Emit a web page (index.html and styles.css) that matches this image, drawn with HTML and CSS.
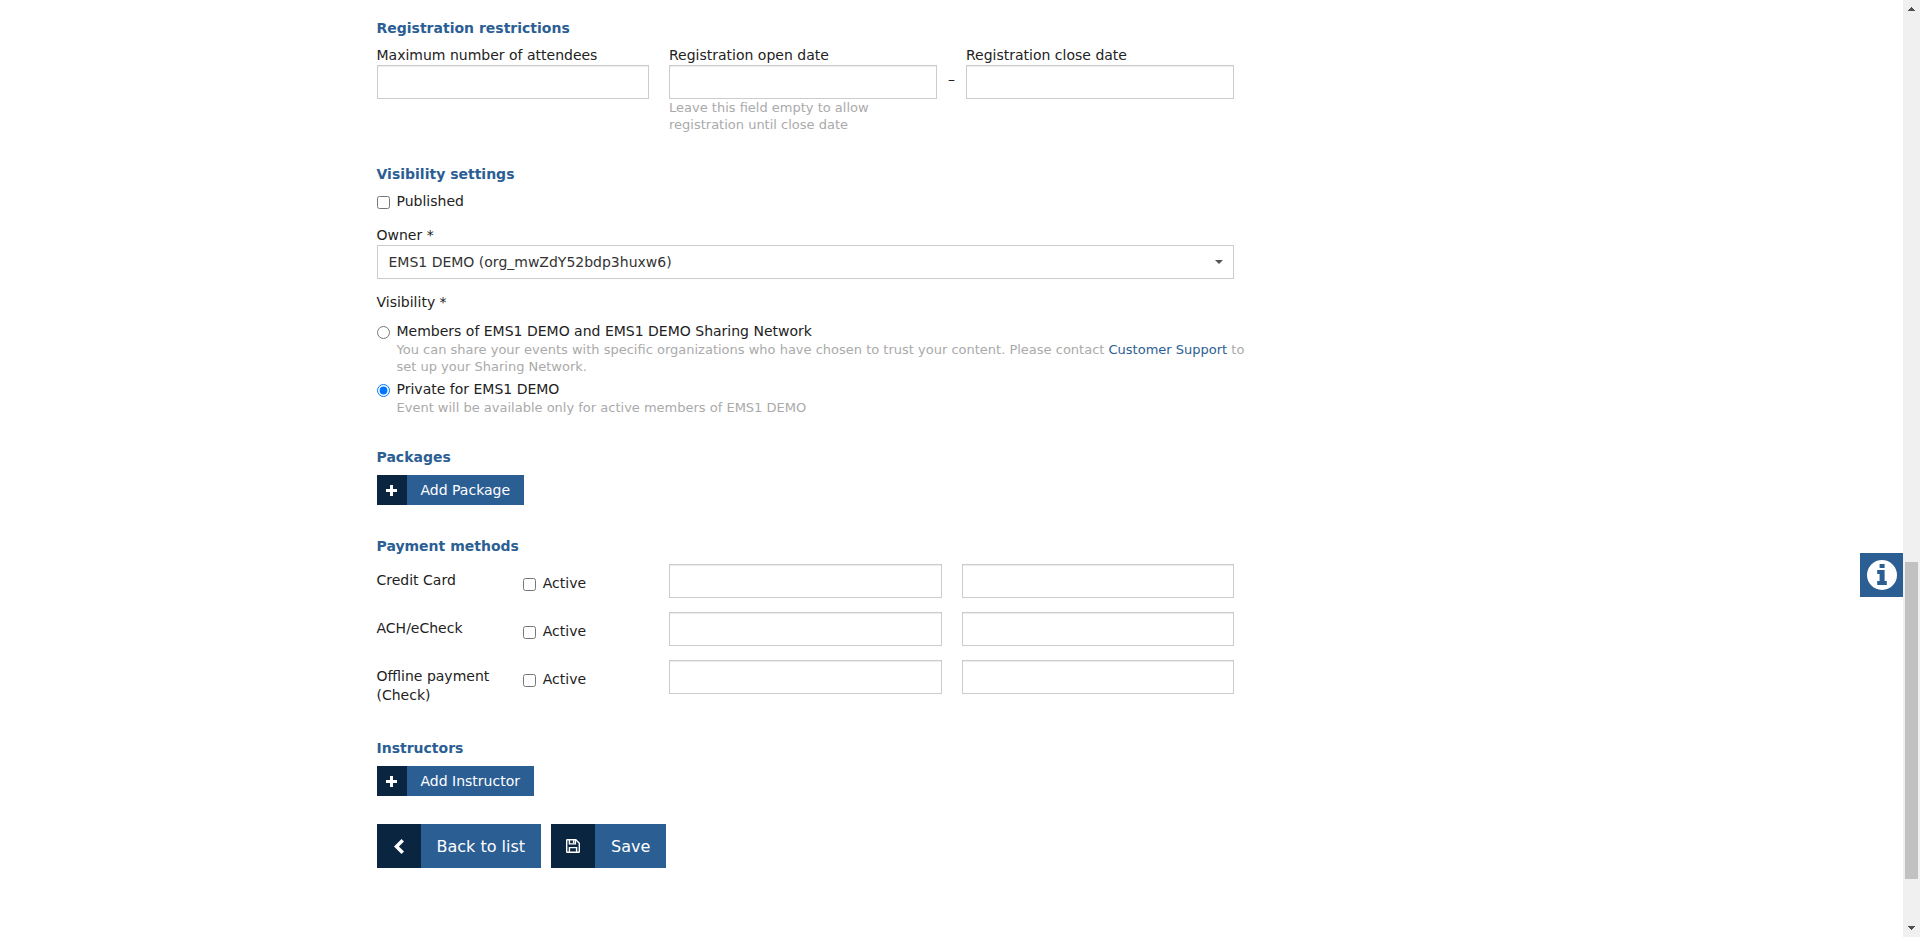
FILE: index.html
```html
<!DOCTYPE html>
<html lang="en">

<head>
  <meta charset="UTF-8" />
  <meta name="viewport" content="width=device-width, initial-scale=1.0" />
  <title>Edit event</title>
  <link rel="stylesheet" href="styles.css">
</head>

<body>
  <main class="container">
    <form class="event-form">

      <section class="form-section">
        <h2>Registration restrictions</h2>
        <div class="row restrictions">
          <div class="field">
            <label for="maxAttendees">Maximum number of attendees</label>
            <input type="text" id="maxAttendees" class="form-control">
          </div>
          <div class="date-range">
            <div class="field">
              <label for="openDate">Registration open date</label>
              <input type="text" id="openDate" class="form-control">
              <p class="hint hint-narrow">Leave this field empty to allow registration until close date</p>
            </div>
            <span class="dash">–</span>
            <div class="field">
              <label for="closeDate">Registration close date</label>
              <input type="text" id="closeDate" class="form-control">
            </div>
          </div>
        </div>
      </section>

      <section class="form-section">
        <h2>Visibility settings</h2>
        <div class="check">
          <input type="checkbox" id="published">
          <label for="published">Published</label>
        </div>
        <div class="field owner">
          <label for="owner">Owner *</label>
          <div class="select-wrap">
            <select id="owner" class="form-control">
              <option>EMS1 DEMO (org_mwZdY52bdp3huxw6)</option>
            </select>
          </div>
        </div>
        <p class="group-label">Visibility *</p>
        <div class="check">
          <input type="radio" name="visibility" id="visMembers">
          <div>
            <label for="visMembers">Members of EMS1 DEMO and EMS1 DEMO Sharing Network</label>
            <p class="hint hint-wide">You can share your events with specific organizations who have chosen to trust your content. Please contact <a href="#">Customer Support</a> to set up your Sharing Network.</p>
          </div>
        </div>
        <div class="check">
          <input type="radio" name="visibility" id="visPrivate" checked>
          <div>
            <label for="visPrivate">Private for EMS1 DEMO</label>
            <p class="hint">Event will be available only for active members of EMS1 DEMO</p>
          </div>
        </div>
      </section>

      <section class="form-section">
        <h2>Packages</h2>
        <button type="button" class="btn">
          <span class="btn-icon">
            <svg width="11" height="11" viewBox="0 0 11 11"><path d="M4 0h3v4h4v3H7v4H4V7H0V4h4z" fill="#fff" /></svg>
          </span>
          <span class="btn-text">Add Package</span>
        </button>
      </section>

      <section class="form-section">
        <h2>Payment methods</h2>
        <div class="row payment">
          <span class="method">Credit Card</span>
          <div class="check">
            <input type="checkbox" id="cardActive">
            <label for="cardActive">Active</label>
          </div>
          <input type="text" class="form-control" aria-label="Credit card first value">
          <input type="text" class="form-control" aria-label="Credit card second value">
        </div>
        <div class="row payment">
          <span class="method">ACH/eCheck</span>
          <div class="check">
            <input type="checkbox" id="achActive">
            <label for="achActive">Active</label>
          </div>
          <input type="text" class="form-control" aria-label="ACH first value">
          <input type="text" class="form-control" aria-label="ACH second value">
        </div>
        <div class="row payment">
          <span class="method">Offline payment (Check)</span>
          <div class="check">
            <input type="checkbox" id="offlineActive">
            <label for="offlineActive">Active</label>
          </div>
          <input type="text" class="form-control" aria-label="Offline first value">
          <input type="text" class="form-control" aria-label="Offline second value">
        </div>
      </section>

      <section class="form-section">
        <h2>Instructors</h2>
        <button type="button" class="btn">
          <span class="btn-icon">
            <svg width="11" height="11" viewBox="0 0 11 11"><path d="M4 0h3v4h4v3H7v4H4V7H0V4h4z" fill="#fff" /></svg>
          </span>
          <span class="btn-text">Add Instructor</span>
        </button>
      </section>

      <div class="actions">
        <button type="button" class="btn btn-lg">
          <span class="btn-icon">
            <svg width="10" height="15" viewBox="0 0 10 15"><path d="M7.5 0L10 2.4 4.9 7.5l5.1 5.1L7.5 15 0 7.5z" fill="#fff" /></svg>
          </span>
          <span class="btn-text">Back to list</span>
        </button>
        <button type="submit" class="btn btn-lg">
          <span class="btn-icon">
            <svg width="14" height="14" viewBox="0 0 14 14" fill="none" stroke="#fff" stroke-width="1.4">
              <path d="M1.2.7h8.6l3.5 3.5v8.6a.5.5 0 0 1-.5.5H1.2a.5.5 0 0 1-.5-.5V1.2a.5.5 0 0 1 .5-.5z" />
              <path d="M3.4.7v4.2h6V.7M3.4 13.3V8.6h7.2v4.7" />
              <path d="M7.6 1.2v2.9" />
            </svg>
          </span>
          <span class="btn-text">Save</span>
        </button>
      </div>

    </form>
  </main>

  <button type="button" class="info-tab" aria-label="Information">
    <svg width="30" height="30" viewBox="0 0 30 30">
      <circle cx="15" cy="15" r="15" fill="#fff" />
      <path d="M12.6 4h5v4h-5zM10.2 10h7.4v11h2.2v4h-9.6v-4h2.4v-7h-2.4z" fill="#2b5e93" />
    </svg>
  </button>

  <div class="scrollbar" aria-hidden="true">
    <svg width="7" height="4" viewBox="0 0 7 4" shape-rendering="crispEdges"><path d="M3 0h1v1h1v1h1v1h1v1H0V3h1V2h1V1h1z" fill="#505050" /></svg>
    <div class="track">
      <div class="thumb"></div>
    </div>
    <svg width="7" height="4" viewBox="0 0 7 4" shape-rendering="crispEdges"><path d="M0 0h7v1H6v1H5v1H4v1H3V3H2V2H1V1H0z" fill="#505050" /></svg>
  </div>
</body>

</html>
```
FILE: styles.css
```css
* {
  box-sizing: border-box;
}

body {
  display: flex;
  min-height: 100vh;
  margin: 0;
  background: #fff;
  color: #222;
  font-family: Verdana, "DejaVu Sans", sans-serif;
  font-size: 14px;
  line-height: 19px;
}

h2,
p {
  margin: 0;
}

h2 {
  margin-bottom: 8px;
  color: #2b5e93;
  font-size: 14px;
  font-weight: bold;
}

a {
  color: #2b5e93;
  text-decoration: none;
}

label {
  display: block;
}

/* Layout */
.container {
  width: 100%;
  max-width: 1170px;
  margin: 0 auto;
  padding-top: 19px;
}

.event-form {
  width: 75%;
  padding: 0 10px;
}

.form-section {
  margin-bottom: 32px;
}

.row {
  display: grid;
  column-gap: 20px;
}

.restrictions {
  grid-template-columns: repeat(3, 1fr);
}

.date-range {
  display: flex;
  grid-column: span 2;
}

.date-range .field {
  flex: 1;
}

.dash {
  width: 29px;
  padding-top: 24px;
  text-align: center;
}

/* Form controls */
.form-control {
  display: block;
  width: 100%;
  height: 34px;
  padding: 6px 11px;
  border: 1px solid #ccc;
  border-radius: 0;
  background: #fff;
  box-shadow: inset 0 1px 1px rgba(0, 0, 0, 0.075);
  color: #333;
  font: inherit;
}

select.form-control {
  appearance: none;
  box-shadow: none;
}

.select-wrap {
  position: relative;
}

.select-wrap::after {
  content: "";
  position: absolute;
  top: 15px;
  right: 11px;
  border: 4px solid transparent;
  border-top-color: #555;
  border-bottom: 0;
  pointer-events: none;
}

.hint {
  color: #aaa;
  font-size: 13px;
  line-height: 17px;
}

.hint-narrow {
  max-width: 220px;
}

/* runs slightly past the column */
.hint-wide {
  margin-right: -20px;
}

.check {
  display: flex;
  gap: 7px;
  margin-bottom: 5px;
}

.check input {
  flex: none;
  width: 13px;
  height: 13px;
  margin: 4px 0 0;
}

.owner {
  margin: 15px 0 14px;
}

.group-label {
  margin-bottom: 10px;
}

/* Payment methods */
.payment {
  grid-template-columns: repeat(2, minmax(0, 1fr)) repeat(2, calc((100% - 40px) / 3));
  margin-bottom: 14px;
}

.payment + .payment {
  margin-top: 14px;
}

.payment:last-child {
  margin-bottom: 0;
}

.payment .method {
  padding: 7px 0 2px;
}

.payment .check {
  margin: 10px 0 0;
}

/* Buttons */
.btn {
  display: inline-flex;
  height: 30px;
  padding: 0;
  border: 0;
  background: #2b5e93;
  color: #fff;
  font: inherit;
  cursor: pointer;
}

.btn-icon {
  display: flex;
  align-items: center;
  justify-content: center;
  width: 30px;
  height: 100%;
  background: #0a2540;
}

.btn-text {
  align-self: center;
  padding: 0 14px;
}

.btn-lg {
  height: 44px;
  font-size: 16px;
}

.btn-lg .btn-icon {
  width: 44px;
}

.btn-lg .btn-text {
  padding: 0 16px;
}

.form-section .btn {
  display: flex;
}

.actions {
  display: flex;
  gap: 10px;
  margin-top: -4px;
}

/* Help tab stuck to the side of the window */
.info-tab {
  position: fixed;
  top: 59%;
  right: 17px;
  display: flex;
  align-items: center;
  justify-content: center;
  width: 43px;
  height: 44px;
  padding: 0;
  border: 0;
  background: #2b5e93;
  cursor: pointer;
}

/* Scrollbar */
.scrollbar {
  display: flex;
  flex: none;
  flex-direction: column;
  align-items: center;
  width: 17px;
  padding: 7px 0;
  background: #f0f0f0;
}

.track {
  display: flex;
  flex: 1;
  flex-direction: column;
  justify-content: flex-end;
  width: 13px;
  padding: 12px 0 47px;
}

.thumb {
  height: 37%;
  background: #c1c1c1;
}
```
